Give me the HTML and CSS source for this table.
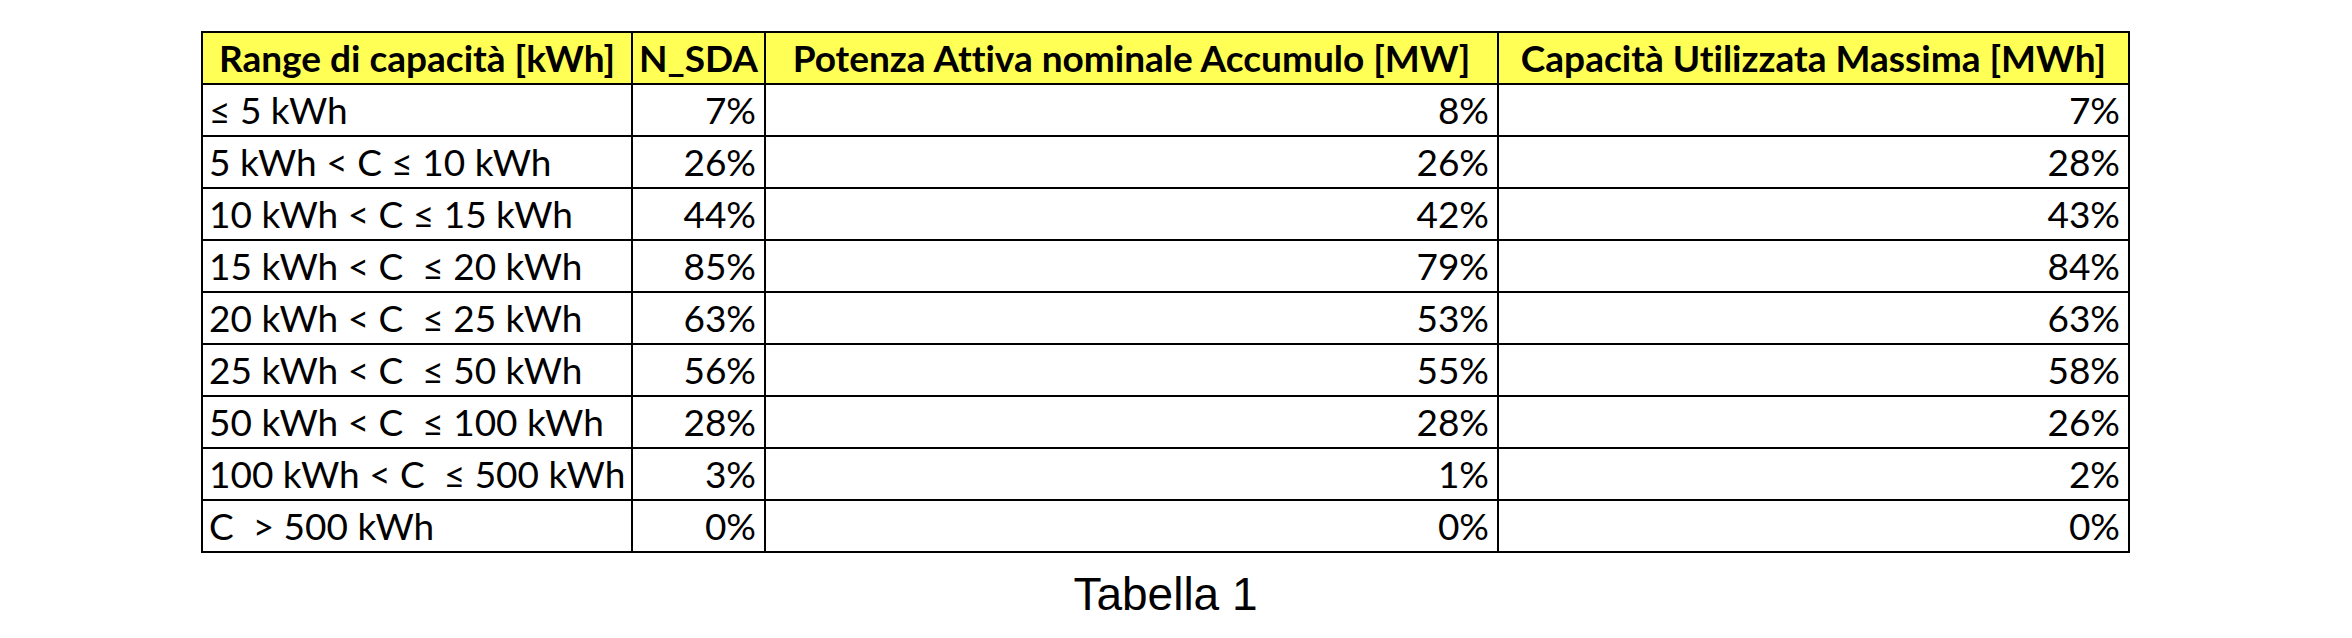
FILE: index.html
```html
<!DOCTYPE html>
<html lang="it">
<head>
<meta charset="utf-8">
<title>Tabella 1</title>
<link rel="stylesheet" href="styles.css">
</head>
<body>
<div class="page">
  <div class="figure">
    <table class="data">
      <colgroup>
        <col class="c-range">
        <col class="c-nsda">
        <col class="c-pot">
        <col class="c-cap">
      </colgroup>
      <thead>
        <tr>
          <th>Range di capacità [kWh]</th>
          <th>N_SDA</th>
          <th>Potenza Attiva nominale Accumulo [MW]</th>
          <th>Capacità Utilizzata Massima [MWh]</th>
        </tr>
      </thead>
      <tbody>
        <tr><td class="label">≤ 5 kWh</td><td>7%</td><td>8%</td><td>7%</td></tr>
        <tr><td class="label">5 kWh &lt; C ≤ 10 kWh</td><td>26%</td><td>26%</td><td>28%</td></tr>
        <tr><td class="label">10 kWh &lt; C ≤ 15 kWh</td><td>44%</td><td>42%</td><td>43%</td></tr>
        <tr><td class="label">15 kWh &lt; C  ≤ 20 kWh</td><td>85%</td><td>79%</td><td>84%</td></tr>
        <tr><td class="label">20 kWh &lt; C  ≤ 25 kWh</td><td>63%</td><td>53%</td><td>63%</td></tr>
        <tr><td class="label">25 kWh &lt; C  ≤ 50 kWh</td><td>56%</td><td>55%</td><td>58%</td></tr>
        <tr><td class="label">50 kWh &lt; C  ≤ 100 kWh</td><td>28%</td><td>28%</td><td>26%</td></tr>
        <tr><td class="label">100 kWh &lt; C  ≤ 500 kWh</td><td>3%</td><td>1%</td><td>2%</td></tr>
        <tr><td class="label">C  &gt; 500 kWh</td><td>0%</td><td>0%</td><td>0%</td></tr>
      </tbody>
    </table>
    <p class="caption">Tabella 1</p>
  </div>
</div>
</body>
</html>
```
FILE: styles.css
```css
html, body {
  margin: 0;
  padding: 0;
  background: #ffffff;
}

.page {
  padding: 31px 0 0 202px;
}

.figure {
  width: 1927px;
  display: flex;
  flex-direction: column;
  align-items: center;
}

.data {
  width: 1927px;
  table-layout: fixed;
  border-collapse: collapse;
  font-family: "Lato", "Open Sans", sans-serif;
  font-size: 37px;
  font-variant-ligatures: none;
  color: #000;
}

.c-range { width: 430px; }
.c-nsda { width: 133px; }
.c-pot { width: 733px; }
.c-cap { width: 631px; }

.data th,
.data td {
  border: 2px solid #000;
  height: 50px;
  padding: 0 8px 0 6px;
  line-height: 50px;
  white-space: pre;
  overflow: hidden;
}

.data th {
  background: #ffff55;
  font-weight: 700;
  text-align: center;
  padding: 0 2px;
}

.data td {
  text-align: right;
}

.data td.label {
  text-align: left;
}

.caption {
  margin: 14px 0 0;
  font-family: "Liberation Sans", Arial, sans-serif;
  font-size: 46px;
  line-height: 54px;
  color: #000;
}
```
